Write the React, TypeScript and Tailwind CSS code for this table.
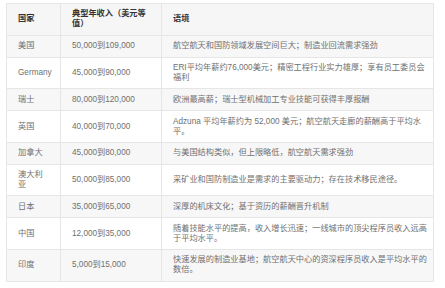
import React from "react";

type Row = [string[], string, string[]];

const rows: Row[] = [
  [["美国"], "50,000到109,000", ["航空航天和国防领域发展空间巨大；制造业回流需求强劲"]],
  [["Germany"], "45,000到90,000", ["ERI平均年薪约76,000美元；精密工程行业实力雄厚；享有员工委员会", "福利"]],
  [["瑞士"], "80,000到120,000", ["欧洲最高薪；瑞士型机械加工专业技能可获得丰厚报酬"]],
  [["英国"], "40,000到70,000", ["Adzuna 平均年薪约为 52,000 美元；航空航天走廊的薪酬高于平均水", "平。"]],
  [["加拿大"], "45,000到80,000", ["与美国结构类似，但上限略低，航空航天需求强劲"]],
  [["澳大利", "亚"], "50,000到85,000", ["采矿业和国防制造业是需求的主要驱动力；存在技术移民途径。"]],
  [["日本"], "35,000到65,000", ["深厚的机床文化；基于资历的薪酬晋升机制"]],
  [["中国"], "12,000到35,000", ["随着技能水平的提高，收入增长迅速；一线城市的顶尖程序员收入远高", "于平均水平。"]],
  [["印度"], "5,000到15,000", ["快速发展的制造业基地；航空航天中心的资深程序员收入是平均水平的", "数倍。"]],
];

const cell = "border border-[#e6e6e6] pl-[11px] pr-[4px] py-[5.4px] text-left align-middle whitespace-nowrap overflow-hidden";

function Lines({ lines }: { lines: string[] }) {
  return (
    <>
      {lines.map((l, i) => (
        <span key={i} className="block">{l}</span>
      ))}
    </>
  );
}

export default function App() {
  return (
    <div
      className="w-[445px] h-[288px] bg-white pt-[3px] pl-[6px]"
      style={{ fontFamily: '"Liberation Sans", "Noto Sans CJK SC", sans-serif' }}
    >
      <table className="table-fixed border-collapse w-[428px] text-[8.2px] leading-[10px]">
        <colgroup>
          <col className="w-[54px]" />
          <col className="w-[101px]" />
          <col />
        </colgroup>
        <thead>
          <tr className="bg-[#f6f6f6]">
            <th className={`${cell} font-bold text-[#333]`}>国家</th>
            <th className={`${cell} font-bold text-[#333]`}>
              <Lines lines={["典型年收入（美元等", "值）"]} />
            </th>
            <th className={`${cell} font-bold text-[#333]`}>语境</th>
          </tr>
        </thead>
        <tbody>
          {rows.map((r, i) => (
            <tr key={i} className={i % 2 === 0 ? "bg-[#f7f7f7]" : "bg-white"}>
              <td className={`${cell} text-[#707070]`}>
                <Lines lines={r[0]} />
              </td>
              <td className={`${cell} text-[#707070]`}>{r[1]}</td>
              <td className={`${cell} text-[#707070]`}>
                <Lines lines={r[2]} />
              </td>
            </tr>
          ))}
        </tbody>
      </table>
    </div>
  );
}
